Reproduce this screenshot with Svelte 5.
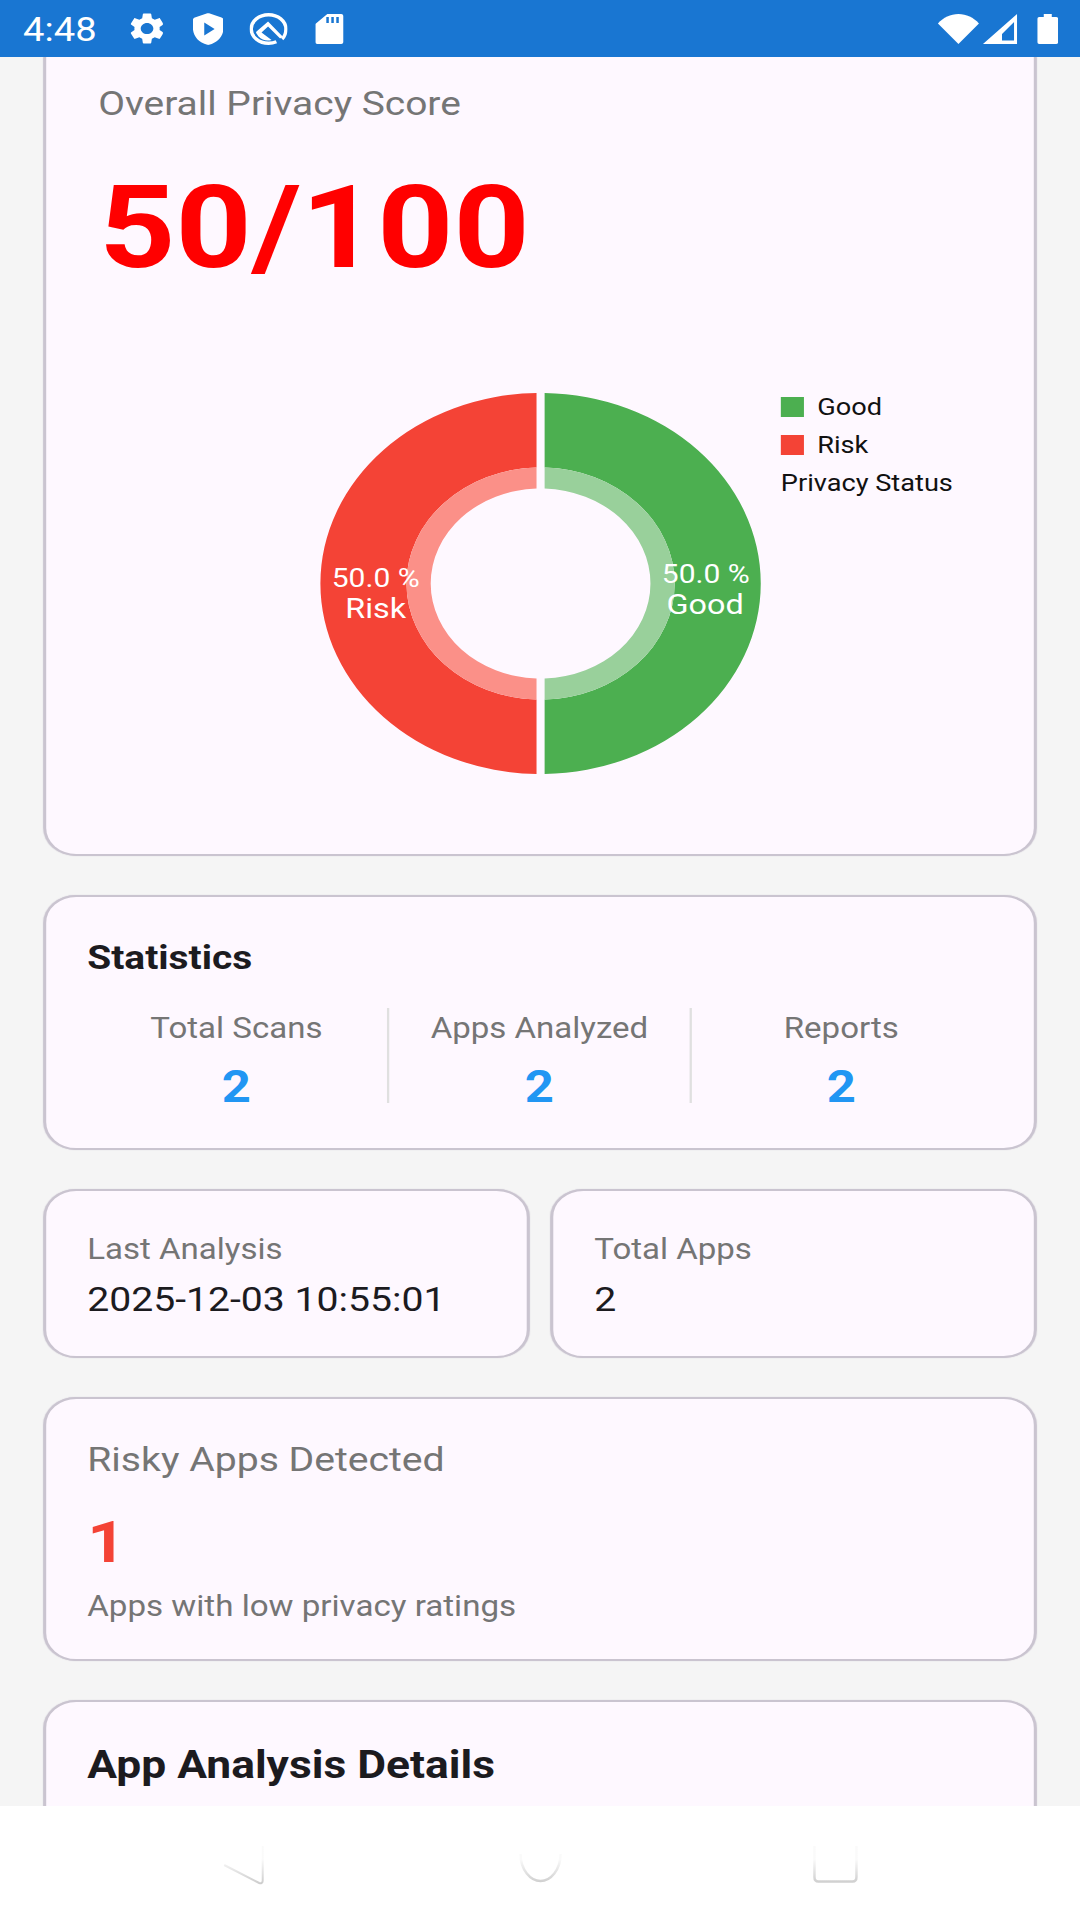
<script>
  const stats = [
    { label: 'Total Scans', value: 2 },
    { label: 'Apps Analyzed', value: 2 },
    { label: 'Reports', value: 2 }
  ];
  const legend = [
    { label: 'Good', color: '#4caf50' },
    { label: 'Risk', color: '#f44336' }
  ];
</script>

<div class="screen">
  <header class="status">
    <span class="time">4:48</span>
    <svg class="i-gear" viewBox="2.6 2 18.8 20" preserveAspectRatio="none"><path fill="#fff" d="M19.14 12.94c.04-.3.06-.61.06-.94 0-.32-.02-.64-.07-.94l2.03-1.58c.18-.14.23-.41.12-.61l-1.92-3.32c-.12-.22-.37-.29-.59-.22l-2.39.96c-.5-.38-1.03-.7-1.62-.94l-.36-2.54c-.04-.24-.24-.41-.48-.41h-3.84c-.24 0-.43.17-.47.41l-.36 2.54c-.59.24-1.13.57-1.62.94l-2.39-.96c-.22-.08-.47 0-.59.22L2.74 8.87c-.12.21-.08.47.12.61l2.03 1.58c-.05.3-.09.63-.09.94s.02.64.07.94l-2.03 1.58c-.18.14-.23.41-.12.61l1.92 3.32c.12.22.37.29.59.22l2.39-.96c.5.38 1.03.7 1.62.94l.36 2.54c.05.24.24.41.48.41h3.84c.24 0 .44-.17.47-.41l.36-2.54c.59-.24 1.13-.56 1.62-.94l2.39.96c.22.08.47 0 .59-.22l1.92-3.32c.12-.22.07-.47-.12-.61l-2.01-1.58zM12 15.6c-1.98 0-3.6-1.62-3.6-3.6s1.62-3.6 3.6-3.6 3.6 1.62 3.6 3.6-1.62 3.6-3.6 3.6z"/></svg>
    <svg class="i-shield" viewBox="0 0 31 32" preserveAspectRatio="none"><path fill="#fff" fill-rule="evenodd" d="M14.6.3c.6-.2 1.2-.2 1.8 0L29 4.4c1.2.4 2 1.4 2 2.6v8c0 8-5.6 14.6-14.6 16.8-.6.2-1.2.2-1.8 0C5.600 29.600 0 23 0 15V7c0-1.200.8-2.200 2-2.600zM11.500 9.500v13l10.500-6.500z"/></svg>
    <svg class="i-q" viewBox="0 0 38 32" preserveAspectRatio="none">
      <path fill="none" stroke="#fff" stroke-width="3.400" d="M32.500 26C35 23.500 36.300 20 36.300 16 36.300 8 28.500 1.700 19 1.700S1.700 8 1.700 16 9.500 30.300 19 30.300c2.800 0 5.400-.5 7.800-1.500"/>
      <path fill="#fff" d="M18.500 8.500 33 23.500l-2.500 2L18.500 13.500 12 19.500l10 7.500c-1.200.4-2.500.5-4 .5-3.200 0-6.500-1.500-9-4l-2-3c-.6-.8-.6-1.500 0-2.100z"/>
    </svg>
    <svg class="i-sd" viewBox="0 0 28 30" preserveAspectRatio="none"><path fill="#fff" fill-rule="evenodd" d="M12 0h14c1.100 0 2 .9 2 2v26c0 1.100-.9 2-2 2H2c-1.100 0-2-.9-2-2V10zM11 3v6h2.500V3zM16 3v6h2.500V3zM21 3v6h2.500V3z"/></svg>
    <span class="spacer"></span>
    <svg class="i-wifi" viewBox="0 0 41 30" preserveAspectRatio="none"><path fill="#fff" d="M0 9.500C5.500 3.500 12.500 0 20.500 0S35.500 3.500 41 9.500L20.500 30z"/></svg>
    <svg class="i-signal" viewBox="0 0 34 30" preserveAspectRatio="none"><path fill="#fff" fill-rule="evenodd" d="M34 0v30H0zM31 8 19 20v6.500h12z"/></svg>
    <svg class="i-batt" viewBox="0 0 21 30" preserveAspectRatio="none"><path fill="#fff" d="M6.500 0h8v3H19c1.100 0 2 .9 2 2v23c0 1.100-.9 2-2 2H2c-1.100 0-2-.9-2-2V5c0-1.100.9-2 2-2h4.500z"/></svg>
  </header>

  <main class="content">
    <section class="card score">
      <div class="score-label">Overall Privacy Score</div>
      <div class="score-value">50/100</div>
      <div class="chart-row">
        <svg class="donut" viewBox="0 0 382 381">
          <path fill="#f44336" d="M187.500 .03A190.500 190.500 0 0 0 187.500 380.970V306.450A116 116 0 0 1 187.500 74.550Z"/>
          <path fill="#4caf50" d="M194.500 .03A190.500 190.500 0 0 1 194.500 380.970V306.450A116 116 0 0 0 194.500 74.550Z"/>
          <path fill="#fb9088" d="M187.500 74.550A116 116 0 0 0 187.500 306.450V285.440A95 95 0 0 1 187.500 95.560Z"/>
          <path fill="#99d09b" d="M194.500 74.550A116 116 0 0 1 194.500 306.450V285.440A95 95 0 0 0 194.500 95.560Z"/>
          <text class="d-pct" x="48.300" y="194">50.0 %</text>
          <text class="d-name" x="48.300" y="225">Risk</text>
          <text class="d-pct" x="334" y="190">50.0 %</text>
          <text class="d-name" x="333.400" y="221">Good</text>
        </svg>
        <div class="legend">
          {#each legend as l}
            <div class="legend-item"><span class="swatch" style="background:{l.color}"></span>{l.label}</div>
          {/each}
          <div class="legend-title">Privacy Status</div>
        </div>
      </div>
    </section>

    <section class="card stats">
      <h2 class="stats-title">Statistics</h2>
      <div class="stats-grid">
        {#each stats as s}
          <div class="stat">
            <div class="stat-label">{s.label}</div>
            <div class="stat-value">{s.value}</div>
          </div>
        {/each}
      </div>
    </section>

    <div class="pair">
      <section class="card mini">
        <div class="mini-label">Last Analysis</div>
        <div class="mini-value">2025-12-03 10:55:01</div>
      </section>
      <section class="card mini">
        <div class="mini-label">Total Apps</div>
        <div class="mini-value">2</div>
      </section>
    </div>

    <section class="card risky">
      <div class="risky-label">Risky Apps Detected</div>
      <div class="risky-value">1</div>
      <div class="risky-note">Apps with low privacy ratings</div>
    </section>

    <section class="card details">
      <h2 class="details-title">App Analysis Details</h2>
    </section>
  </main>

  <footer class="nav">
    <svg class="nav-icon" viewBox="0 0 70 65" preserveAspectRatio="none"><defs><linearGradient id="fade" gradientUnits="userSpaceOnUse" x1="0" y1="16" x2="0" y2="54"><stop offset="0.35" stop-color="#000" stop-opacity="0.02"/><stop offset="1" stop-color="#000" stop-opacity="0.2"/></linearGradient></defs><path fill="none" stroke="url(#fade)" stroke-width="2" d="M14 35 49 53c2 .8 3.500-.3 3.500-2.500V16"/></svg>
    <svg class="nav-icon" viewBox="0 0 70 65" preserveAspectRatio="none"><path fill="none" stroke="url(#fade)" stroke-width="2.500" d="M10 24C10 40 20 51 30 51S50 40 50 24"/></svg>
    <svg class="nav-icon" viewBox="0 0 70 65" preserveAspectRatio="none"><path fill="none" stroke="url(#fade)" stroke-width="2.500" d="M14 16v31c0 3 1.500 4.500 4 4.500h34c2.500 0 4-1.500 4-4.500V16"/></svg>
  </footer>
</div>

<style>
  :global(body) {
    margin: 0;
    font-family: Roboto, "Noto Sans", sans-serif;
  }

  /* the whole capture is stretched sideways, text included */
  .screen {
    width: 935px;
    height: 1920px;
    transform: scaleX(calc(1080 / 935));
    transform-origin: 0 0;
    display: flex;
    flex-direction: column;
    background: #f5f5f5;
    overflow: hidden;
  }

  .status {
    flex: none;
    height: 57px;
    background: #1976d2;
    display: flex;
    align-items: center;
    color: #fff;
    padding: 0 19px 0 20px;
    box-sizing: border-box;
  }
  .time {
    font-size: 33px;
    width: 92.600px;
    line-height: 57px;
    padding-top: 1px;
  }
  .status svg { flex: none; }
  .i-gear { width: 28.600px; height: 31px; margin-right: 25.400px; }
  .i-shield { width: 26.500px; height: 32px; margin-right: 23px; }
  .i-q { width: 33px; height: 32px; margin-right: 24.400px; }
  .i-sd { width: 24.200px; height: 30px; }
  .spacer { flex: 1; }
  .i-wifi { width: 35.500px; height: 30px; margin-right: 3.500px; }
  .i-signal { width: 29.500px; height: 30px; margin-right: 17.300px; }
  .i-batt { width: 18.200px; height: 30px; }

  .content {
    flex: 1;
    min-height: 0;
    overflow: hidden;
    padding: 0 38px;
    display: flex;
    flex-direction: column;
    gap: 39px;
  }

  .card {
    flex: none;
    background: #fef8ff;
    border: 2px solid #cac4d0;
    box-shadow: 0 0 1px #cac4d0;
    border-radius: 28px;
    box-sizing: border-box;
  }

  .score {
    height: 799px;
    border-top: none;
    border-radius: 0 0 28px 28px;
    padding: 26px 0 0 45px;
  }
  .score-label {
    font-size: 33.700px;
    line-height: 42px;
    color: #757575;
  }
  .score-value {
    font-size: 115px;
    line-height: 135px;
    font-weight: 700;
    color: #f00;
    margin-top: 35px;
    margin-left: 1px;
  }
  .chart-row {
    display: flex;
    align-items: flex-start;
    margin-top: 98px;
    margin-left: 192px;
  }
  .donut {
    flex: none;
    width: 382px;
    height: 381px;
  }
  .d-pct, .d-name {
    fill: #fff;
    text-anchor: middle;
    font-family: Roboto, sans-serif;
  }
  .d-pct { font-size: 26px; }
  .d-name { font-size: 28px; }

  .legend {
    margin-left: 17px;
    margin-top: -5px;
    font-size: 23.500px;
    color: #111;
  }
  .legend-item {
    display: flex;
    align-items: center;
    height: 38px;
  }
  .swatch {
    width: 19.500px;
    height: 20px;
    margin-right: 12px;
  }
  .legend-title { line-height: 38px; }

  .stats {
    height: 255px;
    padding: 0 35.500px;
  }
  .stats-title {
    margin: 0;
    padding-top: 40px;
    font-size: 33.700px;
    line-height: 42px;
    font-weight: 700;
    color: #1c1b1f;
  }
  .stats-grid {
    display: grid;
    grid-template-columns: repeat(3, 1fr);
    margin: 29px 1.500px 0 -1.500px;
  }
  .stat {
    height: 95px;
    text-align: center;
  }
  .stat + .stat { border-left: 2px solid #e0e0e0; }
  .stat-label {
    font-size: 28.600px;
    line-height: 40px;
    color: #757575;
  }
  .stat-value {
    font-size: 44px;
    line-height: 52px;
    font-weight: 700;
    color: #2196f3;
    margin-top: 13px;
  }

  .pair {
    flex: none;
    display: flex;
    gap: 19px;
  }
  .mini {
    flex: 1;
    height: 169px;
    padding: 38px 35.500px 0;
  }
  .mini-label {
    font-size: 28.600px;
    line-height: 40px;
    color: #757575;
  }
  .mini-value {
    font-size: 33.900px;
    line-height: 44px;
    color: #1c1b1f;
    margin-top: 9px;
  }

  .risky {
    height: 264px;
    padding: 40px 35.500px 0;
  }
  .risky-label {
    font-size: 33.900px;
    line-height: 42px;
    color: #757575;
  }
  .risky-value {
    font-size: 58px;
    line-height: 68px;
    font-weight: 700;
    color: #f44336;
    margin-top: 27px;
  }
  .risky-note {
    font-size: 28.700px;
    line-height: 40px;
    color: #757575;
    margin-top: 10px;
  }

  .details {
    height: 300px;
    padding: 0 35.500px;
  }
  .details-title {
    margin: 0;
    padding-top: 40px;
    font-size: 38.400px;
    line-height: 46px;
    font-weight: 700;
    color: #1c1b1f;
  }

  .nav {
    flex: none;
    height: 114px;
    background: #fff;
    display: flex;
    padding: 24px 0 0 181.800px;
    box-sizing: border-box;
  }
  .nav-icon {
    flex: none;
    width: 60.600px;
    height: 65px;
    margin-right: 199.200px;
  }
  .nav-icon + .nav-icon { margin-right: 190.400px; }
</style>
